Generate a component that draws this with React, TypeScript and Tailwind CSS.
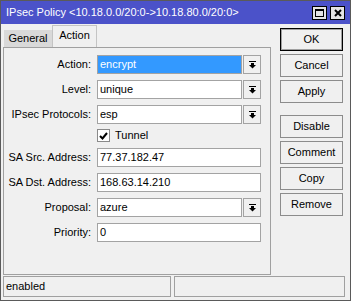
import type { ReactNode } from "react";

// small down-arrow with a bar, like the winbox combo button
function DropArrow() {
  return (
    <svg width="7" height="8" viewBox="0 0 7 8" className="block">
      <rect x="0" y="0" width="7" height="1" fill="#000" />
      <rect x="2" y="2" width="3" height="2" fill="#000" />
      <polygon points="0,4 7,4 3.5,7.5" fill="#000" />
    </svg>
  );
}

type RowProps = { label: string; children: ReactNode };

function Row({ label, children }: RowProps) {
  return (
    <div className="flex items-center h-[19px] mb-[6px]">
      <div className="w-[87px] text-right whitespace-nowrap">{label}</div>
      <div className="ml-[6px] w-[164px] h-full flex">{children}</div>
    </div>
  );
}

function Field({ value, selected }: { value: string; selected?: boolean }) {
  return (
    <div
      className={`flex-1 h-full border border-[#a3a3a3] flex items-center pl-[2px] ${
        selected ? "bg-[#3399ff] text-white" : "bg-white text-black"
      }`}
    >
      {value}
    </div>
  );
}

function Combo({ value, selected }: { value: string; selected?: boolean }) {
  return (
    <>
      <Field value={value} selected={selected} />
      <div className="ml-[1px] w-[18px] h-full border border-[#a3a3a3] bg-[#f0f0f0] flex items-center justify-center">
        <DropArrow />
      </div>
    </>
  );
}

function SideButton({ label, main }: { label: string; main?: boolean }) {
  return (
    <div
      className={`w-[63px] h-[23px] flex items-center justify-center bg-[#f0f0f0] ${
        main ? "border border-black shadow-[inset_0_0_0_1px_#a0a0a0]" : "border border-[#8c8c8c]"
      }`}
    >
      {label}
    </div>
  );
}

export default function App() {
  return (
    <div className="w-[351px] h-[301px] flex flex-col bg-[#f0f0f0] border border-[#5a5a5a] font-['Liberation_Sans',Arial,sans-serif] text-[11px] text-black overflow-hidden">
      {/* title bar */}
      <div className="h-[23px] shrink-0 bg-[#4b52c9] flex items-center pl-[5px] pr-[5px] text-white">
        <span className="whitespace-nowrap">IPsec Policy &lt;10.18.0.0/20:0-&gt;10.18.80.0/20:0&gt;</span>
        <div className="ml-auto flex gap-[3px]">
          <div className="w-[15px] h-[14px] bg-[#e4e4e4] border border-black flex items-center justify-center">
            <div className="w-[9px] h-[8px] border border-black border-t-2" />
          </div>
          <div className="w-[15px] h-[14px] bg-[#e4e4e4] border border-black flex items-center justify-center">
            <svg width="8" height="8" viewBox="0 0 8 8">
              <path d="M1 1 L7 7 M7 1 L1 7" stroke="#000" strokeWidth="2" />
            </svg>
          </div>
        </div>
      </div>

      {/* body */}
      <div className="flex h-[251px] shrink-0">
        <div className="ml-[2px] w-[268px] flex flex-col">
          {/* tabs */}
          <div className="h-[23px] flex items-end">
            <div className="ml-[1px] w-[48px] h-[17px] bg-[#d9d9d9] flex items-center justify-center">General</div>
            <div className="w-[45px] h-[22px] border border-b-0 border-[#c4c4c4] bg-[#f0f0f0] flex items-center justify-center pb-[2px]">
              Action
            </div>
          </div>
          {/* panel */}
          <div className="h-[228px] border border-[#a0a0a0] pt-[7px]">
            <Row label="Action:">
              <Combo value="encrypt" selected />
            </Row>
            <Row label="Level:">
              <Combo value="unique" />
            </Row>
            <Row label="IPsec Protocols:">
              <Combo value="esp" />
            </Row>
            <div className="flex items-center h-[13px] mt-[-1px] mb-[6px] pl-[93px]">
              <div className="w-[13px] h-[13px] border border-[#8a8a8a] bg-white flex items-center justify-center">
                <svg width="9" height="8" viewBox="0 0 9 8">
                  <path d="M1 4 L3.5 6.5 L8 1" stroke="#000" strokeWidth="2" fill="none" />
                </svg>
              </div>
              <span className="ml-[5px]">Tunnel</span>
            </div>
            <Row label="SA Src. Address:">
              <Field value="77.37.182.47" />
            </Row>
            <Row label="SA Dst. Address:">
              <Field value="168.63.14.210" />
            </Row>
            <Row label="Proposal:">
              <Combo value="azure" />
            </Row>
            <Row label="Priority:">
              <Field value="0" />
            </Row>
          </div>
        </div>

        {/* buttons */}
        <div className="ml-[9px] pt-[4px] flex flex-col gap-[3px]">
          <SideButton label="OK" main />
          <SideButton label="Cancel" />
          <SideButton label="Apply" />
          <div className="h-[6px]" />
          <SideButton label="Disable" />
          <SideButton label="Comment" />
          <SideButton label="Copy" />
          <SideButton label="Remove" />
        </div>
      </div>

      {/* status bar */}
      <div className="mt-[1px] h-[21px] flex gap-[3px] pl-[2px] pr-[5px]">
        <div className="w-[168px] h-full border border-[#a0a0a0] flex items-center pl-[2px]">enabled</div>
        <div className="flex-1 h-full border border-[#a0a0a0]" />
      </div>
    </div>
  );
}
